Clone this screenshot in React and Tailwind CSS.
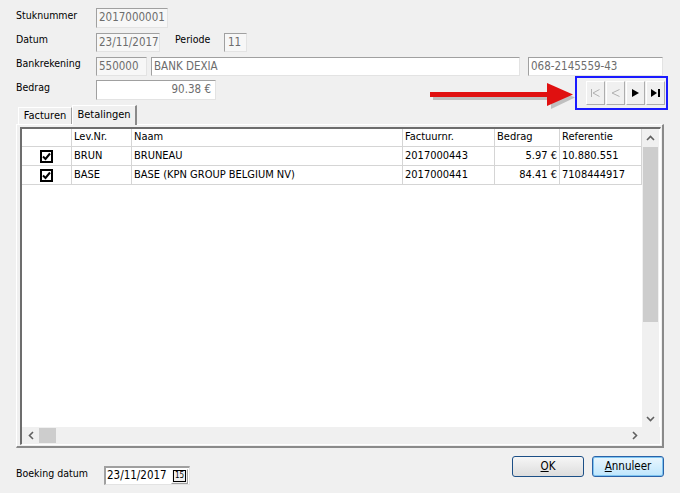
import React from "react";

const sunken = "border-t border-l border-t-[#a0a0a0] border-l-[#a0a0a0] border-b border-r border-b-[#e3e3e3] border-r-[#e3e3e3]";

function Field({ w, children, right, white, dark }) {
  return (
    <div
      className={`${sunken} h-full ${white ? "bg-white" : "bg-[#f7f7f7]"} ${dark ? "text-black" : "text-[#6d6d6d]"} flex items-center px-[2px] text-[11.5px] leading-none ${right ? "justify-end pr-[4px]" : ""}`}
      style={{ width: w }}
    >
      {children}
    </div>
  );
}

function Label({ w, children, className = "" }) {
  return (
    <div className={`text-[10.5px] text-black leading-none ${className}`} style={{ width: w }}>
      {children}
    </div>
  );
}

function Check() {
  return (
    <div className="w-[13px] h-[13px] border-2 border-black bg-white flex items-center justify-center">
      <svg width="9" height="9" viewBox="0 0 9 9">
        <path d="M1 4.5 L3.5 7 L8 1.5" stroke="black" strokeWidth="2" fill="none" />
      </svg>
    </div>
  );
}

const cols = [50, 60, 271, 92, 65, 82];

function NavBtn({ children }) {
  return (
    <div className="w-[19px] h-[24px] bg-[#f0f0f0] border border-[#adadad] border-t-white border-l-white flex items-center justify-center">
      {children}
    </div>
  );
}

export default function App() {
  return (
    <div className="w-[680px] h-[493px] bg-[#f0f0f0] relative overflow-hidden font-['DejaVu_Sans_Condensed','Liberation_Sans',Arial,sans-serif] text-[11px]">
      <div className="flex flex-col pl-[16px]">
        {/* Row 1 */}
        <div className="flex items-center mt-[8px] h-[20px]">
          <Label w={80} className="-mt-[6px]">Stuknummer</Label>
          <Field w={72}>2017000001</Field>
        </div>
        {/* Row 2 */}
        <div className="flex items-center mt-[5px] h-[19px]">
          <Label w={80} className="-mt-[6px]">Datum</Label>
          <Field w={64}>23/11/2017</Field>
          <Label w={49} className="ml-[15px] -mt-[6px]">Periode</Label>
          <div className="w-[23px] h-full">
            <Field w={23} right>
              <span className="w-full text-center">11</span>
            </Field>
          </div>
        </div>
        {/* Row 3 */}
        <div className="flex items-center mt-[5px] h-[19px]">
          <Label w={80} className="-mt-[6px]">Bankrekening</Label>
          <Field w={51}>550000</Field>
          <div className="ml-[4px] h-full">
            <Field w={369} white>BANK DEXIA</Field>
          </div>
          <div className="ml-[8px] h-full">
            <Field w={135} white>068-2145559-43</Field>
          </div>
        </div>
        {/* Row 4 */}
        <div className="flex items-center mt-[4px] h-[20px]">
          <Label w={80} className="-mt-[6px]">Bedrag</Label>
          <Field w={120} white right>90.38 €</Field>
        </div>

        {/* Tabs */}
        <div className="flex items-end mt-[4px] h-[20px] pl-[2px]">
          <div className="h-[17px] w-[54px] border-t border-l border-white border-r border-r-[#a0a0a0] flex items-center justify-center text-[11px]">
            Facturen
          </div>
          <div className="h-[20px] w-[65px] border-t border-l border-white border-r-2 border-r-[#8a8a8a] bg-[#f0f0f0] flex items-center justify-center text-[11px] -mb-[1px] relative z-10">
            Betalingen
          </div>
        </div>

        {/* Panel */}
        <div className="w-[648px] h-[324px] border-t border-l border-white border-r-2 border-b-2 border-r-[#8a8a8a] border-b-[#8a8a8a] pt-[2px] pl-[3px]">
          <div className="w-[641px] h-[318px] border-t-2 border-l-2 border-t-[#6d6d6d] border-l-[#6d6d6d] border-b border-r border-b-white border-r-white bg-white flex flex-col">
            <div className="flex flex-1 min-h-0">
              {/* table */}
              <div className="flex flex-col w-[620px]">
                <div className="flex h-[18px] bg-white border-b border-[#d5d5d5]">
                  {["", "Lev.Nr.", "Naam", "Factuurnr.", "Bedrag", "Referentie"].map((h, i) => (
                    <div
                      key={i}
                      className="h-full border-r border-[#d5d5d5] px-[2px] flex items-center text-[11px]"
                      style={{ width: cols[i] }}
                    >
                      {h}
                    </div>
                  ))}
                </div>
                {[
                  ["BRUN", "BRUNEAU", "2017000443", "5.97 €", "10.880.551"],
                  ["BASE", "BASE (KPN GROUP BELGIUM NV)", "2017000441", "84.41 €", "7108444917"],
                ].map((r, ri) => (
                  <div key={ri} className="flex h-[19px] border-b border-[#d5d5d5]">
                    <div className="h-full flex items-center justify-center border-r border-[#d5d5d5]" style={{ width: cols[0] }}>
                      <Check />
                    </div>
                    {r.map((c, ci) => (
                      <div
                        key={ci}
                        className={`h-full border-r border-[#d5d5d5] px-[2px] flex items-center text-[11px] ${ci === 3 ? "justify-end" : ""}`}
                        style={{ width: cols[ci + 1] }}
                      >
                        {c}
                      </div>
                    ))}
                  </div>
                ))}
              </div>
              {/* vscroll */}
              <div className="w-[17px] bg-[#f0f0f0] flex flex-col">
                <div className="h-[18px] flex items-center justify-center">
                  <svg width="9" height="6" viewBox="0 0 9 6"><path d="M1 5 L4.5 1.5 L8 5" stroke="#606060" strokeWidth="1.6" fill="none" /></svg>
                </div>
                <div className="h-[175px] bg-[#cdcdcd] mx-[1px]" />
                <div className="flex-1" />
                <div className="h-[17px] flex items-center justify-center">
                  <svg width="9" height="6" viewBox="0 0 9 6"><path d="M1 1 L4.5 4.5 L8 1" stroke="#606060" strokeWidth="1.6" fill="none" /></svg>
                </div>
              </div>
            </div>
            {/* hscroll */}
            <div className="h-[17px] flex bg-[#f0f0f0]">
              <div className="w-[17px] flex items-center justify-center">
                <svg width="6" height="9" viewBox="0 0 6 9"><path d="M5 1 L1.5 4.5 L5 8" stroke="#606060" strokeWidth="1.6" fill="none" /></svg>
              </div>
              <div className="w-[17px] bg-[#cdcdcd] my-[1px]" />
              <div className="flex-1" />
              <div className="w-[17px] flex items-center justify-center">
                <svg width="6" height="9" viewBox="0 0 6 9"><path d="M1 1 L4.5 4.5 L1 8" stroke="#606060" strokeWidth="1.6" fill="none" /></svg>
              </div>
              <div className="w-[17px] bg-[#f0f0f0]" />
            </div>
          </div>
        </div>

        {/* Bottom */}
        <div className="flex items-start mt-[8px]">
          <Label w={88} className="mt-[12px]">Boeking datum</Label>
          <div className="mt-[10px] w-[86px] h-[19px] bg-white border-t-2 border-l-2 border-t-[#a0a0a0] border-l-[#a0a0a0] border-b border-r border-b-[#e3e3e3] border-r-[#e3e3e3] flex items-center pl-[1px] text-[11.5px] text-black">
            <span className="flex-1">23/11/2017</span>
            <div className="w-[17px] h-[15px] bg-[#f0f0f0] border border-[#a0a0a0] border-t-white border-l-white flex items-center justify-center mr-[1px]">
              <span className="text-[8px] leading-none border border-black px-[1px] py-[1px]">15</span>
            </div>
          </div>
          <div className="ml-[322px] w-[72px] h-[21px] rounded-[3px] border border-[#1c4f86] bg-gradient-to-b from-[#f6f6f6] to-[#dddddd] flex items-center justify-center text-[11.5px]">
            <span><span className="underline">O</span>K</span>
          </div>
          <div className="ml-[8px] w-[72px] h-[21px] rounded-[3px] border border-[#2a62a8] bg-gradient-to-b from-[#eaf6fd] to-[#bee6fd] flex items-center justify-center text-[11.5px] shadow-[inset_0_0_0_1px_#7ec4f0]">
            <span><span className="underline">A</span>nnuleer</span>
          </div>
        </div>
      </div>

      {/* Annotation: red arrow and highlighted navigation buttons */}
      <div className="absolute left-[428px] top-[82px]">
        <svg width="148" height="28" viewBox="0 0 148 28">
          <path d="M3 10 L121 10 L121 2 L145 12.5 L121 24 L121 15 L3 15 Z" fill="#505050" opacity="0.3" transform="translate(2,3)" />
          <rect x="2" y="10" width="122" height="5" fill="#e01010" />
          <path d="M119 1 L145 12.5 L119 24 Z" fill="#e01010" />
        </svg>
      </div>
      <div className="absolute left-[575px] top-[76px] w-[93px] h-[34px] border-2 border-[#1a1aff] flex items-center pl-[9px] gap-[1px]">
        <NavBtn>
          <svg width="11" height="10" viewBox="0 0 11 10"><path d="M1.5 1 V9 M9.5 1.5 L3 5 L9.5 8.5" stroke="#b0b0b0" strokeWidth="1" fill="none" /></svg>
        </NavBtn>
        <NavBtn>
          <svg width="11" height="10" viewBox="0 0 11 10"><path d="M9.5 1.5 L2 5 L9.5 8.5" stroke="#b0b0b0" strokeWidth="1" fill="none" /></svg>
        </NavBtn>
        <NavBtn>
          <svg width="9" height="10" viewBox="0 0 9 10"><path d="M1 1 L8 5 L1 9 Z" fill="black" /></svg>
        </NavBtn>
        <NavBtn>
          <svg width="11" height="10" viewBox="0 0 11 10"><path d="M1 1 L7 5 L1 9 Z" fill="black" /><rect x="8" y="1" width="2" height="8" fill="black" /></svg>
        </NavBtn>
      </div>
    </div>
  );
}
